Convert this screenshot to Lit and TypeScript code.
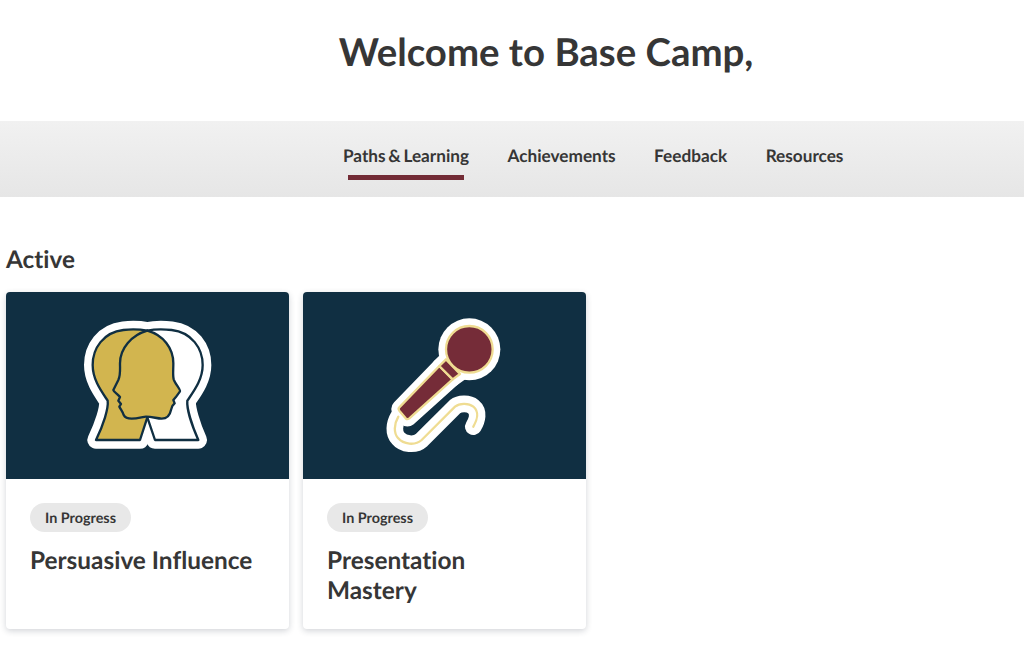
import { LitElement, html, css, svg } from 'lit';
import { customElement } from 'lit/decorators.js';

const NAVY = '#102f42';
const LEFT_HEAD = 'M262 92C240 88 215 87 190 90C130 97 98 145 98 195C98 240 125 275 143 302C146 325 130 375 108 420L240 420L262 352Z';
const RIGHT_HEAD = 'M262 92C285 87 310 87 335 90C395 97 428 145 428 195C428 240 400 275 382 302C380 325 395 375 415 420L285 420L262 352Z';
const FACE = 'M262 92C215 105 180 145 180 190C180 212 182 225 175 240L160 270C160 274 175 285 180 291L175 302L183 312L178 320C182 328 188 335 191 345C195 353 205 356 215 356C235 355 250 350 258 350C275 350 290 355 305 356C320 356 330 345 333 330L337 318L344 310L340 300L347 292L360 274C362 270 345 250 341 238C338 225 340 212 340 190C340 145 310 105 262 92Z';

const heads = svg`
  <path d=${LEFT_HEAD} fill="#fff" stroke="#fff" stroke-width="52" stroke-linejoin="round" />
  <path d=${RIGHT_HEAD} fill="#fff" stroke="#fff" stroke-width="52" stroke-linejoin="round" />
  <path d=${LEFT_HEAD} fill="#d2b54f" stroke=${NAVY} stroke-width="7" stroke-linejoin="round" />
  <path d=${RIGHT_HEAD} fill="#fff" stroke=${NAVY} stroke-width="7" stroke-linejoin="round" />
  <path d=${FACE} fill="#d2b54f" stroke=${NAVY} stroke-width="7" stroke-linejoin="round" />
`;

const CABLE = 'M85 350C72 372 70 400 85 415C100 433 135 438 155 420L255 320C268 310 295 308 310 320C328 335 322 360 310 380';
const HANDLE = 'M208 198L248 238L118 355C114 358 110 358 107 355L88 332C85 328 85 325 88 322Z';
const COLLAR = 'M228 178L270 222L248 238L208 198Z';

const mic = svg`
  <path d=${CABLE} fill="none" stroke="#fff" stroke-width="50" stroke-linecap="round" />
  <path d=${HANDLE} fill="#fff" stroke="#fff" stroke-width="44" stroke-linejoin="round" />
  <path d=${COLLAR} fill="#fff" stroke="#fff" stroke-width="44" stroke-linejoin="round" />
  <circle cx="298" cy="148" r="93" fill="#fff" />
  <path d=${CABLE} fill="none" stroke="#efdc92" stroke-width="7" stroke-linecap="round" />
  <path d=${HANDLE} fill="#752c38" stroke="#efdc92" stroke-width="7" stroke-linejoin="round" />
  <path d=${COLLAR} fill="#752c38" stroke="#efdc92" stroke-width="7" stroke-linejoin="round" />
  <circle cx="298" cy="148" r="70" fill="#752c38" stroke="#efdc92" stroke-width="7" />
`;

const NAV_ITEMS = ['Paths & Learning', 'Achievements', 'Feedback', 'Resources'];

const CARDS = [
  { title: 'Persuasive Influence', viewBox: '-162 -24 849 561', art: heads },
  { title: 'Presentation Mastery', viewBox: '-201 -24 849 561', art: mic },
];

@customElement('app-root')
export class AppRoot extends LitElement {
  static styles = css`
    :host {
      display: block;
      height: 648px;
      overflow: hidden;
      background: #fff;
      color: #363636;
      font-family: Lato, 'Liberation Sans', sans-serif;
      font-variant-ligatures: none;
      text-rendering: geometricPrecision;
    }

    h1 {
      margin: 0;
      height: 121px;
      padding-top: 28px;
      padding-left: 68px;
      box-sizing: border-box;
      text-align: center;
      font-size: 38.4px;
      line-height: 48px;
      font-weight: 700;
    }

    nav {
      display: flex;
      gap: 38.5px;
      height: 76px;
      padding-left: 343px;
      background: linear-gradient(#f1f1f1, #e6e6e6);
    }

    .nav-item {
      position: relative;
      padding-top: 24px;
      font-size: 17.2px;
      line-height: 22px;
      font-weight: 700;
      word-spacing: -1.5px;
    }

    .nav-item.active::after {
      content: '';
      position: absolute;
      left: 5px;
      right: 5px;
      top: 54px;
      height: 5px;
      background: #732c36;
    }

    main {
      padding: 48px 6px 0;
    }

    h2 {
      margin: 0 0 18px;
      font-size: 24.3px;
      line-height: 29px;
      font-weight: 700;
    }

    .cards {
      display: flex;
      gap: 14px;
    }

    .card {
      width: 283px;
      height: 337px;
      border-radius: 4px;
      overflow: hidden;
      background: #fff;
      box-shadow: 0 2px 6px rgba(30, 40, 60, 0.2);
    }

    .art {
      display: block;
      width: 283px;
      height: 187px;
      background: #102f42;
    }

    .body {
      padding: 24px 30px 24px 24px;
    }

    .chip {
      display: inline-block;
      padding: 2px 15px 0;
      border-radius: 15px;
      background: #e8e8e8;
      font-size: 14.4px;
      line-height: 27px;
      font-weight: 700;
    }

    h3 {
      margin: 14px 0 0;
      font-size: 24.4px;
      line-height: 30px;
      font-weight: 700;
    }
  `;

  render() {
    return html`
      <h1>Welcome to Base Camp,</h1>
      <nav>
        ${NAV_ITEMS.map(
          (item, i) => html`<div class="nav-item ${i === 0 ? 'active' : ''}">${item}</div>`
        )}
      </nav>
      <main>
        <h2>Active</h2>
        <div class="cards">
          ${CARDS.map(
            (card) => html`
              <div class="card">
                <svg class="art" viewBox=${card.viewBox}>${card.art}</svg>
                <div class="body">
                  <span class="chip">In Progress</span>
                  <h3>${card.title}</h3>
                </div>
              </div>
            `
          )}
        </div>
      </main>
    `;
  }
}
